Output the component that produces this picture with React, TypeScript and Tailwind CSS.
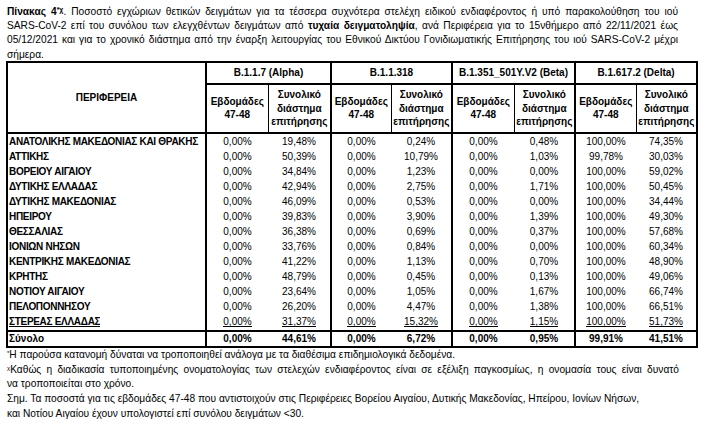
import React from "react";

type Row = { name: string; v: string[] };

const rows: Row[] = [
  { name: "ΑΝΑΤΟΛΙΚΗΣ ΜΑΚΕΔΟΝΙΑΣ ΚΑΙ ΘΡΑΚΗΣ", v: ["0,00%", "19,48%", "0,00%", "0,24%", "0,00%", "0,48%", "100,00%", "74,35%"] },
  { name: "ΑΤΤΙΚΗΣ", v: ["0,00%", "50,39%", "0,00%", "10,79%", "0,00%", "1,03%", "99,78%", "30,03%"] },
  { name: "ΒΟΡΕΙΟΥ ΑΙΓΑΙΟΥ", v: ["0,00%", "34,84%", "0,00%", "1,23%", "0,00%", "0,00%", "100,00%", "59,02%"] },
  { name: "ΔΥΤΙΚΗΣ ΕΛΛΑΔΑΣ", v: ["0,00%", "42,94%", "0,00%", "2,75%", "0,00%", "1,71%", "100,00%", "50,45%"] },
  { name: "ΔΥΤΙΚΗΣ ΜΑΚΕΔΟΝΙΑΣ", v: ["0,00%", "46,09%", "0,00%", "0,53%", "0,00%", "0,00%", "100,00%", "34,44%"] },
  { name: "ΗΠΕΙΡΟΥ", v: ["0,00%", "39,83%", "0,00%", "3,90%", "0,00%", "1,39%", "100,00%", "49,30%"] },
  { name: "ΘΕΣΣΑΛΙΑΣ", v: ["0,00%", "36,38%", "0,00%", "0,69%", "0,00%", "0,37%", "100,00%", "57,68%"] },
  { name: "ΙΟΝΙΩΝ ΝΗΣΩΝ", v: ["0,00%", "33,76%", "0,00%", "0,84%", "0,00%", "0,00%", "100,00%", "60,34%"] },
  { name: "ΚΕΝΤΡΙΚΗΣ ΜΑΚΕΔΟΝΙΑΣ", v: ["0,00%", "41,22%", "0,00%", "1,13%", "0,00%", "0,70%", "100,00%", "48,90%"] },
  { name: "ΚΡΗΤΗΣ", v: ["0,00%", "48,79%", "0,00%", "0,45%", "0,00%", "0,13%", "100,00%", "49,06%"] },
  { name: "ΝΟΤΙΟΥ ΑΙΓΑΙΟΥ", v: ["0,00%", "23,64%", "0,00%", "1,05%", "0,00%", "1,67%", "100,00%", "66,74%"] },
  { name: "ΠΕΛΟΠΟΝΝΗΣΟΥ", v: ["0,00%", "26,20%", "0,00%", "4,47%", "0,00%", "1,38%", "100,00%", "66,51%"] },
  { name: "ΣΤΕΡΕΑΣ ΕΛΛΑΔΑΣ", v: ["0,00%", "31,37%", "0,00%", "15,32%", "0,00%", "1,15%", "100,00%", "51,73%"] },
];

const total: string[] = ["0,00%", "44,61%", "0,00%", "6,72%", "0,00%", "0,95%", "99,91%", "41,51%"];

const groups = ["B.1.1.7 (Alpha)", "B.1.1.318", "B.1.351_501Y.V2 (Beta)", "B.1.617.2 (Delta)"];

function Cell({ text, clipped }: { text: string; clipped: boolean }) {
  if (!clipped) return <>{text}</>;
  return (
    <span className="inline-block align-top h-[12px] overflow-hidden border-b border-black leading-[14px]">
      {text}
    </span>
  );
}

export default function App() {
  const justified = "w-[671px] text-justify [text-align-last:justify]";
  return (
    <div className="w-[716px] h-[445px] bg-white text-black overflow-hidden font-['Liberation_Sans',Arial,sans-serif]">
      <div className="pl-[7px] pt-[5px] text-[10.2px] leading-[14.2px] whitespace-nowrap">
        <div className={justified}>
          <b>
            Πίνακας 4<sup className="text-[7px]">*χ</sup>
          </b>
          . Ποσοστό εγχώριων θετικών δειγμάτων για τα τέσσερα συχνότερα στελέχη ειδικού ενδιαφέροντος ή υπό παρακολούθηση του ιού
        </div>
        <div className={justified}>
          SARS-CoV-2 επί του συνόλου των ελεγχθέντων δειγμάτων από <b>τυχαία δειγματοληψία</b>, ανά Περιφέρεια για το 15νθήμερο από 22/11/2021 έως
        </div>
        <div className={justified}>
          05/12/2021 και για το χρονικό διάστημα από την έναρξη λειτουργίας του Εθνικού Δικτύου Γονιδιωματικής Επιτήρησης του ιού SARS-CoV-2 μέχρι
        </div>
        <div>σήμερα.</div>
      </div>

      <table className="ml-[6px] mt-[-1px] w-[690px] table-fixed border-collapse border-2 border-black text-[10px]">
        <colgroup>
          <col className="w-[199px]" />
          <col className="w-[62px]" />
          <col className="w-[63px]" />
          <col className="w-[60px]" />
          <col className="w-[61px]" />
          <col className="w-[62px]" />
          <col className="w-[61px]" />
          <col className="w-[61px]" />
          <col className="w-[61px]" />
        </colgroup>
        <thead>
          <tr className="h-[22px]">
            <th rowSpan={2} className="border-2 border-black font-bold text-center align-middle p-0">
              ΠΕΡΙΦΕΡΕΙΑ
            </th>
            {groups.map((g) => (
              <th key={g} colSpan={2} className="border-2 border-black font-bold text-center align-middle p-0 whitespace-nowrap">
                {g}
              </th>
            ))}
          </tr>
          <tr className="h-[49px]">
            {groups.map((g) => (
              <React.Fragment key={g}>
                <th className="border-2 border-r border-black font-bold text-center align-middle p-0 leading-[13.3px] whitespace-nowrap">
                  Εβδομάδες
                  <br />
                  47-48
                </th>
                <th className="border-2 border-l border-black font-bold text-center align-middle p-0 leading-[13.3px] whitespace-nowrap">
                  Συνολικό
                  <br />
                  διάστημα
                  <br />
                  επιτήρησης
                </th>
              </React.Fragment>
            ))}
          </tr>
        </thead>
        <tbody>
          {rows.map((r, i) => {
            const last = i === rows.length - 1;
            const va = last ? "align-top pt-[1px]" : "align-middle";
            return (
              <tr key={r.name} className="h-[15px]">
                <td className={"border-x-2 border-black font-bold text-left pl-[1px] pr-0 py-0 leading-[15px] whitespace-nowrap overflow-hidden tracking-[-0.3px] " + va}>
                  <Cell text={r.name} clipped={last} />
                </td>
                {r.v.map((x, j) => (
                  <td
                    key={j}
                    className={
                      (j % 2 === 0 ? "border-l-2 " : "border-r-2 ") +
                      "border-black text-center px-0 py-0 leading-[15px] whitespace-nowrap " +
                      va
                    }
                  >
                    <Cell text={x} clipped={last} />
                  </td>
                ))}
              </tr>
            );
          })}
          <tr className="h-[15px]">
            <td className="border-2 border-black font-bold text-left pl-[1px] p-0 leading-[14px] whitespace-nowrap">
              Σύνολο
            </td>
            {total.map((x, j) => (
              <td
                key={j}
                className={
                  (j % 2 === 0 ? "border-l-2 " : "border-r-2 ") +
                  "border-y-2 border-black font-bold text-center p-0 leading-[14px] whitespace-nowrap"
                }
              >
                {x}
              </td>
            ))}
          </tr>
        </tbody>
      </table>

      <div className="pl-[7px] text-[10.2px] leading-[14.7px] whitespace-nowrap">
        <div>
          <sup className="text-[6px]">*</sup>Η παρούσα κατανομή δύναται να τροποποιηθεί ανάλογα με τα διαθέσιμα επιδημιολογικά δεδομένα.
        </div>
        <div className="w-[672px] text-justify [text-align-last:justify]">
          <sup className="text-[6px]">χ</sup>Καθώς η διαδικασία τυποποιημένης ονοματολογίας των στελεχών ενδιαφέροντος είναι σε εξέλιξη παγκοσμίως, η ονομασία τους είναι δυνατό
        </div>
        <div>να τροποποιείται στο χρόνο.</div>
        <div>
          Σημ. Τα ποσοστά για τις εβδομάδες 47-48 που αντιστοιχούν στις Περιφέρειες Βορείου Αιγαίου, Δυτικής Μακεδονίας, Ηπείρου, Ιονίων Νήσων,
        </div>
        <div>και Νοτίου Αιγαίου έχουν υπολογιστεί επί συνόλου δειγμάτων &lt;30.</div>
      </div>
    </div>
  );
}
